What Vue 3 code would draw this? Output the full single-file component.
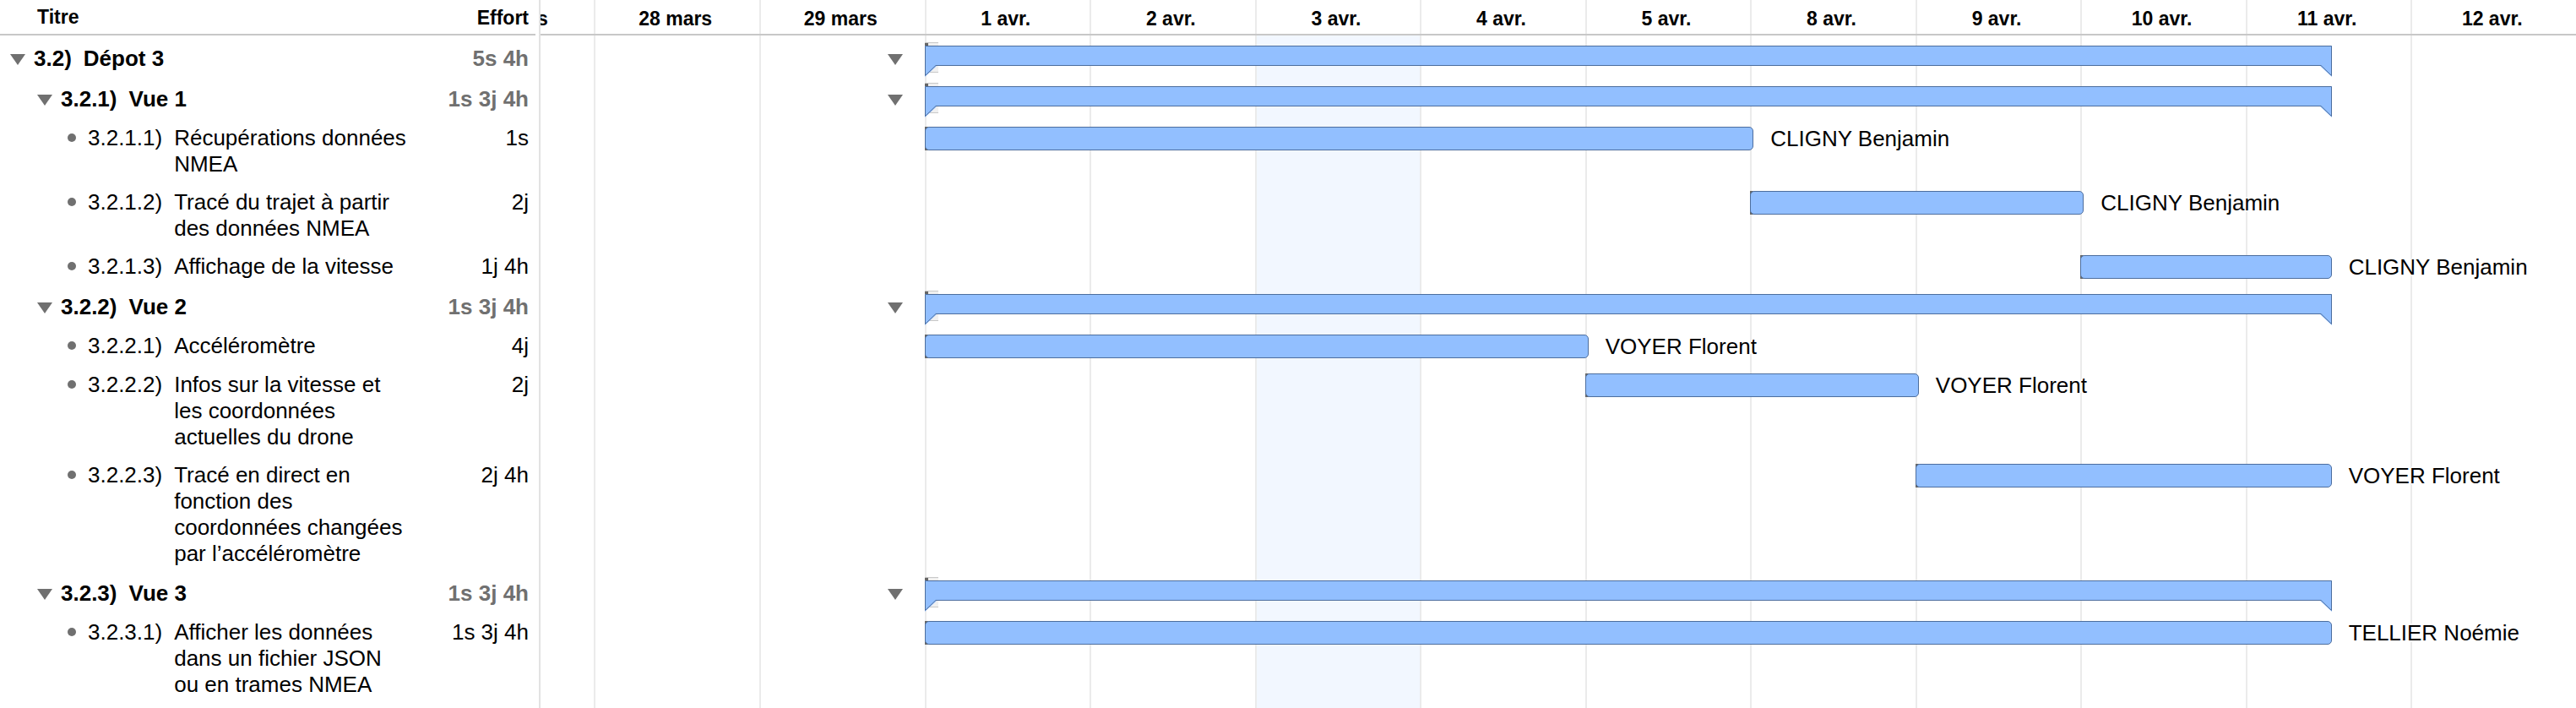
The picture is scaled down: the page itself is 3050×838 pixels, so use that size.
<script setup>
import { ref, computed } from 'vue'

const days = ['28 mars', '29 mars', '1 avr.', '2 avr.', '3 avr.', '4 avr.', '5 avr.', '8 avr.', '9 avr.', '10 avr.', '11 avr.', '12 avr.']

// Horizontal scale of the timeline, in percent of its width
const DAY = 8.114
const ORIGIN = 18.86
const FIRST_APRIL = 2
const at = (day) => ORIGIN + day * DAY
const dayStyle = (i) => ({ left: at(i - FIRST_APRIL) + '%', width: DAY + '%' })
const barStyle = (row) => ({ left: at(row.start) + '%', width: row.length * DAY + '%' })

const rows = [
  { code: '3.2)', title: 'Dépot 3', effort: '5s 4h', level: 1, group: true, start: 0, length: 8.5 },
  { code: '3.2.1)', title: 'Vue 1', effort: '1s 3j 4h', level: 2, group: true, start: 0, length: 8.5 },
  { code: '3.2.1.1)', title: 'Récupérations données NMEA', effort: '1s', level: 3, start: 0, length: 5, who: 'CLIGNY Benjamin' },
  { code: '3.2.1.2)', title: 'Tracé du trajet à partir des données NMEA', effort: '2j', level: 3, start: 5, length: 2, who: 'CLIGNY Benjamin' },
  { code: '3.2.1.3)', title: 'Affichage de la vitesse', effort: '1j 4h', level: 3, start: 7, length: 1.5, who: 'CLIGNY Benjamin' },
  { code: '3.2.2)', title: 'Vue 2', effort: '1s 3j 4h', level: 2, group: true, start: 0, length: 8.5 },
  { code: '3.2.2.1)', title: 'Accéléromètre', effort: '4j', level: 3, start: 0, length: 4, who: 'VOYER Florent' },
  { code: '3.2.2.2)', title: 'Infos sur la vitesse et les coordonnées actuelles du drone', effort: '2j', level: 3, start: 4, length: 2, who: 'VOYER Florent' },
  { code: '3.2.2.3)', title: 'Tracé en direct en fonction des coordonnées changées par l’accéléromètre', effort: '2j 4h', level: 3, start: 6, length: 2.5, who: 'VOYER Florent' },
  { code: '3.2.3)', title: 'Vue 3', effort: '1s 3j 4h', level: 2, group: true, start: 0, length: 8.5 },
  { code: '3.2.3.1)', title: 'Afficher les données dans un fichier JSON ou en trames NMEA', effort: '1s 3j 4h', level: 3, start: 0, length: 8.5, who: 'TELLIER Noémie' }
]

const closed = ref([])
const prefix = (code) => code.replace(')', '.')
const visible = computed(() => rows.filter((r) => !closed.value.some((c) => r.code.startsWith(prefix(c)))))
function toggle(code) {
  closed.value = closed.value.includes(code) ? closed.value.filter((c) => c !== code) : [...closed.value, code]
}
</script>

<template>
  <main class="planner">
    <div class="days" aria-hidden="true">
      <div v-for="(day, i) in days" :key="day" class="day" :class="{ today: day === '3 avr.' }" :style="dayStyle(i)"></div>
    </div>
    <table class="sheet">
      <colgroup>
        <col class="col-title" />
        <col class="col-effort" />
        <col />
      </colgroup>
      <thead>
        <tr>
          <th class="head-title" scope="col">Titre</th>
          <th class="head-effort" scope="col">Effort</th>
          <th class="head-days" scope="col">
            <span class="date previous">s</span>
            <span v-for="(day, i) in days" :key="day" class="date" :style="dayStyle(i)">{{ day }}</span>
          </th>
        </tr>
      </thead>
      <tbody>
        <tr v-for="row in visible" :key="row.code" :class="row.group ? 'group' : 'task'">
          <td class="cell">
            <div class="entry" :class="'level-' + row.level">
              <button v-if="row.group" class="toggle" type="button" :aria-label="'Replier ' + row.title" @click="toggle(row.code)">
                <svg width="18" height="13" viewBox="0 0 18 13"><path d="M0 0H18L9 13Z" fill="#707070" /></svg>
              </button>
              <span v-else class="bullet"></span>
              <span class="code">{{ row.code }}</span>
              <span class="title">{{ row.title }}</span>
            </div>
          </td>
          <td class="cell effort">{{ row.effort }}</td>
          <td class="lane">
            <div class="track" :style="barStyle(row)">
              <template v-if="row.group">
                <button class="toggle fold" type="button" :aria-label="'Replier ' + row.title" @click="toggle(row.code)">
                  <svg width="18" height="13" viewBox="0 0 18 13"><path d="M0 0H18L9 13Z" fill="#707070" /></svg>
                </button>
                <div class="handle"></div>
                <div class="summary">
                  <svg width="14" height="37" viewBox="0 0 14 37"><path d="M0 0H14V24L0 37Z" fill="#92bfff" /><path d="M14 .5H.5V35.5L13 23.5H14" fill="none" stroke="#4d6e9e" /></svg>
                  <div class="span"></div>
                  <svg width="14" height="37" viewBox="0 0 14 37"><path d="M0 0H14V37L0 24Z" fill="#92bfff" /><path d="M0 .5H13.5V35.5L1 23.5H0" fill="none" stroke="#4d6e9e" /></svg>
                </div>
              </template>
              <template v-else>
                <div class="stub"></div>
                <div class="bar"></div>
                <span class="who">{{ row.who }}</span>
              </template>
            </div>
          </td>
        </tr>
      </tbody>
    </table>
  </main>
</template>

<style>
body {
  margin: 0;
  background: #fff;
}
</style>

<style scoped>
.planner {
  position: relative;
  min-height: 100vh;
  overflow: hidden;
  font-family: "Liberation Sans", Arial, sans-serif;
  font-size: 26px;
  line-height: 31px;
  color: #000;
}
.days {
  position: absolute;
  top: 0;
  bottom: 0;
  left: 638px;
  right: 0;
  overflow: hidden;
  border-left: 2px solid #e2e2e2;
}
.day {
  position: absolute;
  top: 0;
  bottom: 0;
  box-sizing: border-box;
  border-left: 2px solid #ebebeb;
}
.today {
  background: linear-gradient(#fff 42px, #f2f7ff 42px);
}
.sheet {
  position: relative;
  width: 100%;
  table-layout: fixed;
  border-collapse: separate;
  border-spacing: 0;
}
.col-title {
  width: 500px;
}
.col-effort {
  width: 140px;
}
th {
  box-sizing: border-box;
  height: 42px;
  padding: 0;
  font-size: 23px;
  line-height: 40px;
  text-align: left;
  border-bottom: 2px solid #c8c8c8;
}
.head-title {
  padding-left: 44px;
}
.head-effort {
  padding-right: 14px;
  text-align: right;
  border-bottom: 0;
  background: linear-gradient(#c8c8c8, #c8c8c8) 0 100% / 134px 2px no-repeat;
}
.head-days {
  position: relative;
  overflow: hidden;
}
.date {
  position: absolute;
  top: 2px;
  box-sizing: border-box;
  padding-right: 3px;
  text-align: center;
}
.previous {
  left: -4px;
}
td {
  padding: 0;
  vertical-align: top;
}
.task td {
  height: 46px;
}
.group td {
  height: 48px;
  font-weight: bold;
}
.task .cell {
  box-sizing: border-box;
  padding-top: 10px;
  padding-bottom: 4px;
}
.group .cell {
  box-sizing: border-box;
  padding-top: 12px;
  padding-bottom: 5px;
}
.entry {
  display: flex;
  align-items: flex-start;
}
.level-1 {
  padding-left: 12px;
}
.level-2 {
  padding-left: 44px;
}
.level-3 {
  padding-left: 80px;
}
.toggle {
  display: flex;
  flex: none;
  padding: 0;
  margin: 10px 10px 0 0;
  border: 0;
  background: none;
  cursor: pointer;
}
.bullet {
  flex: none;
  width: 10px;
  height: 10px;
  margin: 10px 14px 0 0;
  border-radius: 50%;
  background: #707070;
}
.code {
  flex: none;
  margin-right: 14px;
}
.title {
  max-width: 280px;
}
.effort {
  padding-right: 14px;
  text-align: right;
  white-space: nowrap;
}
.group .effort {
  color: #707070;
}
.lane {
  position: relative;
}
.track {
  position: absolute;
  top: 12px;
  height: 28px;
}
.summary {
  position: relative;
  display: flex;
  margin-right: -4px;
}
.summary svg {
  flex: none;
}
.span {
  flex: 1;
  box-sizing: border-box;
  height: 24px;
  background: #92bfff;
  border: solid #4d6e9e;
  border-width: 1px 0;
}
.fold {
  position: absolute;
  right: 100%;
  margin-right: 26px;
}
.handle {
  position: absolute;
  top: -4px;
  left: 0;
  box-sizing: border-box;
  width: 16px;
  height: 36px;
  border: solid #c8c8c8;
  border-width: 1px 0;
  background: linear-gradient(#666, #666) 0 0 / 4px 4px no-repeat border-box, #f0f0f0;
}
.stub {
  position: absolute;
  top: 0;
  left: 0;
  width: 4px;
  height: 28px;
  background: #666;
}
.bar {
  position: relative;
  box-sizing: border-box;
  height: 28px;
  margin-right: -4px;
  background: #92bfff;
  border: 1px solid #4d6e9e;
  border-radius: 5px;
}
.who {
  position: absolute;
  top: 0;
  left: 100%;
  margin-left: 24px;
  line-height: 28px;
  white-space: nowrap;
  text-shadow: 2px 0 #fff, -2px 0 #fff, 0 2px #fff, 0 -2px #fff;
}
</style>
